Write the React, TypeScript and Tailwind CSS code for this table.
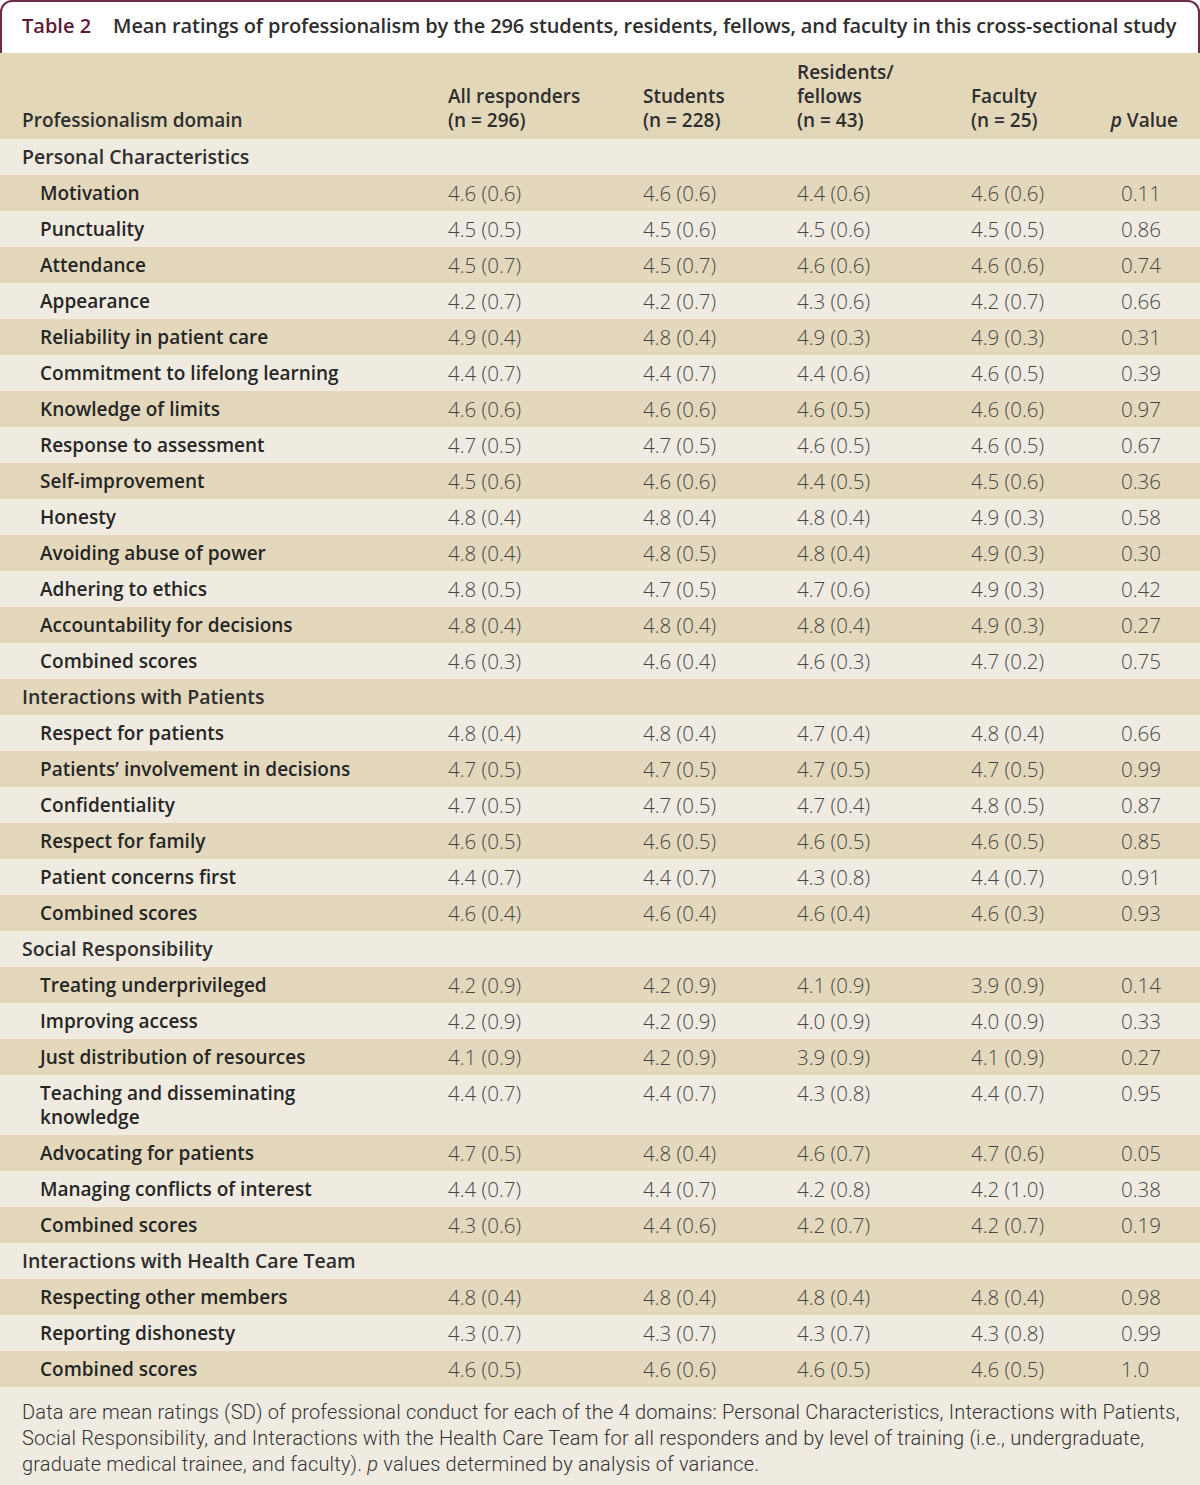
const cols = 'grid grid-cols-[448px_195px_154px_174px_150px_1fr]';

type Row =
  | { kind: 'section'; label: string }
  | { kind: 'item'; label: string; v: [string, string, string, string, string] };

const rows: Row[] = [
  { kind: 'section', label: 'Personal Characteristics' },
  { kind: 'item', label: 'Motivation', v: ['4.6 (0.6)', '4.6 (0.6)', '4.4 (0.6)', '4.6 (0.6)', '0.11'] },
  { kind: 'item', label: 'Punctuality', v: ['4.5 (0.5)', '4.5 (0.6)', '4.5 (0.6)', '4.5 (0.5)', '0.86'] },
  { kind: 'item', label: 'Attendance', v: ['4.5 (0.7)', '4.5 (0.7)', '4.6 (0.6)', '4.6 (0.6)', '0.74'] },
  { kind: 'item', label: 'Appearance', v: ['4.2 (0.7)', '4.2 (0.7)', '4.3 (0.6)', '4.2 (0.7)', '0.66'] },
  { kind: 'item', label: 'Reliability in patient care', v: ['4.9 (0.4)', '4.8 (0.4)', '4.9 (0.3)', '4.9 (0.3)', '0.31'] },
  { kind: 'item', label: 'Commitment to lifelong learning', v: ['4.4 (0.7)', '4.4 (0.7)', '4.4 (0.6)', '4.6 (0.5)', '0.39'] },
  { kind: 'item', label: 'Knowledge of limits', v: ['4.6 (0.6)', '4.6 (0.6)', '4.6 (0.5)', '4.6 (0.6)', '0.97'] },
  { kind: 'item', label: 'Response to assessment', v: ['4.7 (0.5)', '4.7 (0.5)', '4.6 (0.5)', '4.6 (0.5)', '0.67'] },
  { kind: 'item', label: 'Self-improvement', v: ['4.5 (0.6)', '4.6 (0.6)', '4.4 (0.5)', '4.5 (0.6)', '0.36'] },
  { kind: 'item', label: 'Honesty', v: ['4.8 (0.4)', '4.8 (0.4)', '4.8 (0.4)', '4.9 (0.3)', '0.58'] },
  { kind: 'item', label: 'Avoiding abuse of power', v: ['4.8 (0.4)', '4.8 (0.5)', '4.8 (0.4)', '4.9 (0.3)', '0.30'] },
  { kind: 'item', label: 'Adhering to ethics', v: ['4.8 (0.5)', '4.7 (0.5)', '4.7 (0.6)', '4.9 (0.3)', '0.42'] },
  { kind: 'item', label: 'Accountability for decisions', v: ['4.8 (0.4)', '4.8 (0.4)', '4.8 (0.4)', '4.9 (0.3)', '0.27'] },
  { kind: 'item', label: 'Combined scores', v: ['4.6 (0.3)', '4.6 (0.4)', '4.6 (0.3)', '4.7 (0.2)', '0.75'] },
  { kind: 'section', label: 'Interactions with Patients' },
  { kind: 'item', label: 'Respect for patients', v: ['4.8 (0.4)', '4.8 (0.4)', '4.7 (0.4)', '4.8 (0.4)', '0.66'] },
  { kind: 'item', label: 'Patients\u2019 involvement in decisions', v: ['4.7 (0.5)', '4.7 (0.5)', '4.7 (0.5)', '4.7 (0.5)', '0.99'] },
  { kind: 'item', label: 'Confidentiality', v: ['4.7 (0.5)', '4.7 (0.5)', '4.7 (0.4)', '4.8 (0.5)', '0.87'] },
  { kind: 'item', label: 'Respect for family', v: ['4.6 (0.5)', '4.6 (0.5)', '4.6 (0.5)', '4.6 (0.5)', '0.85'] },
  { kind: 'item', label: 'Patient concerns first', v: ['4.4 (0.7)', '4.4 (0.7)', '4.3 (0.8)', '4.4 (0.7)', '0.91'] },
  { kind: 'item', label: 'Combined scores', v: ['4.6 (0.4)', '4.6 (0.4)', '4.6 (0.4)', '4.6 (0.3)', '0.93'] },
  { kind: 'section', label: 'Social Responsibility' },
  { kind: 'item', label: 'Treating underprivileged', v: ['4.2 (0.9)', '4.2 (0.9)', '4.1 (0.9)', '3.9 (0.9)', '0.14'] },
  { kind: 'item', label: 'Improving access', v: ['4.2 (0.9)', '4.2 (0.9)', '4.0 (0.9)', '4.0 (0.9)', '0.33'] },
  { kind: 'item', label: 'Just distribution of resources', v: ['4.1 (0.9)', '4.2 (0.9)', '3.9 (0.9)', '4.1 (0.9)', '0.27'] },
  { kind: 'item', label: 'Teaching and disseminating\nknowledge', v: ['4.4 (0.7)', '4.4 (0.7)', '4.3 (0.8)', '4.4 (0.7)', '0.95'] },
  { kind: 'item', label: 'Advocating for patients', v: ['4.7 (0.5)', '4.8 (0.4)', '4.6 (0.7)', '4.7 (0.6)', '0.05'] },
  { kind: 'item', label: 'Managing conflicts of interest', v: ['4.4 (0.7)', '4.4 (0.7)', '4.2 (0.8)', '4.2 (1.0)', '0.38'] },
  { kind: 'item', label: 'Combined scores', v: ['4.3 (0.6)', '4.4 (0.6)', '4.2 (0.7)', '4.2 (0.7)', '0.19'] },
  { kind: 'section', label: 'Interactions with Health Care Team' },
  { kind: 'item', label: 'Respecting other members', v: ['4.8 (0.4)', '4.8 (0.4)', '4.8 (0.4)', '4.8 (0.4)', '0.98'] },
  { kind: 'item', label: 'Reporting dishonesty', v: ['4.3 (0.7)', '4.3 (0.7)', '4.3 (0.7)', '4.3 (0.8)', '0.99'] },
  { kind: 'item', label: 'Combined scores', v: ['4.6 (0.5)', '4.6 (0.6)', '4.6 (0.5)', '4.6 (0.5)', '1.0'] },
];

const sans = "font-['Open_Sans',sans-serif]";

export default function App() {
  return (
    <div className="w-[1200px] h-[1485px] bg-white text-[#2b2b2b] overflow-hidden">
      {/* caption */}
      <div className="h-[53px] border-[2px] border-b-0 border-[#6b2a48] rounded-t-[12px] flex items-center pl-[20px] pb-[3px] whitespace-nowrap">
        <span className={`${sans} text-[20px] font-semibold text-[#5c1a3a]`}>Table 2</span>
        <span className={`${sans} text-[20px] font-semibold ml-[22px] tracking-[-0.1px] text-[#2e2e2e]`}>
          Mean ratings of professionalism by the 296 students, residents, fellows, and faculty in this cross-sectional study
        </span>
      </div>

      {/* header */}
      <div className={`${cols} bg-[#e3d7ba] h-[86px] items-end pb-[7px] ${sans} text-[19px] font-semibold leading-[24px] text-[#2e2e2e] whitespace-nowrap`}>
        <div className="pl-[22px]">Professionalism domain</div>
        <div>All responders<br />(n = 296)</div>
        <div>Students<br />(n = 228)</div>
        <div>Residents/<br />fellows<br />(n = 43)</div>
        <div>Faculty<br />(n = 25)</div>
        <div className="ml-[-40px] text-right pr-[22px]"><i>p</i> Value</div>
      </div>

      {rows.map((r, i) => {
        const bg = i % 2 === 0 ? 'bg-[#f0ebe1]' : 'bg-[#e3d8bc]';
        if (r.kind === 'section') {
          return (
            <div key={i} className={`${bg} h-[36px] flex items-center pl-[22px] ${sans} text-[19.5px] font-semibold text-[#2e2e2e]`}>
              {r.label}
            </div>
          );
        }
        return (
          <div key={i} className={`${cols} ${bg} py-[6px] leading-[24px]`}>
            <div className={`pl-[40px] whitespace-pre-line ${sans} text-[19px] font-semibold text-[#262626]`}>{r.label}</div>
            {r.v.map((x, j) => (
              <div key={j} className={`${sans} text-[20.5px] font-light text-[#474747] whitespace-nowrap`}>{x}</div>
            ))}
          </div>
        );
      })}

      <div className="bg-[#f0ebe1] pl-[22px] pt-[12px] font-['Roboto',sans-serif] font-light text-[20px] leading-[26px] text-[#333] h-[98px] whitespace-nowrap tracking-[0.18px]">
        Data are mean ratings (SD) of professional conduct for each of the 4 domains: Personal Characteristics, Interactions with Patients,
        <br />
        Social Responsibility, and Interactions with the Health Care Team for all responders and by level of training (i.e., undergraduate,
        <br />
        graduate medical trainee, and faculty). <i>p</i> values determined by analysis of variance.
      </div>
    </div>
  );
}
